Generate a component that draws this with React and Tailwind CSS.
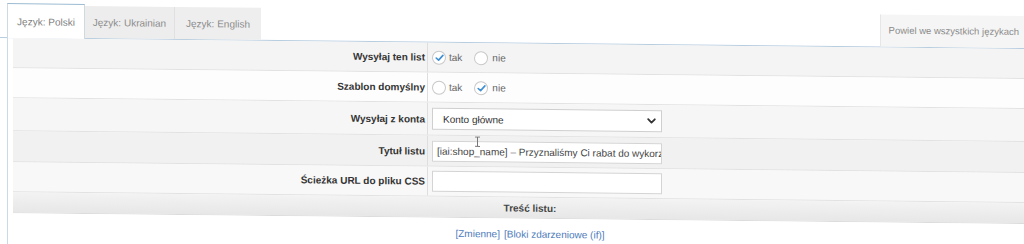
import React from "react";

function Radio({ checked }) {
  return (
    <span className="inline-flex h-[14px] w-[14px] shrink-0 items-center justify-center rounded-full border border-[#c8c8c8] bg-white">
      {checked && (
        <svg width="9" height="8" viewBox="0 0 9 8">
          <path
            d="M1.2 4.3 L3.6 6.4 L7.9 1.6"
            fill="none"
            stroke="#3f8fd4"
            strokeWidth="1.6"
            strokeLinecap="round"
            strokeLinejoin="round"
          />
        </svg>
      )}
    </span>
  );
}

function RadioPair({ value }) {
  return (
    <div className="flex items-center text-[10px] text-[#666]">
      <Radio checked={value === "tak"} />
      <span className="ml-[3px]">tak</span>
      <span className="ml-[12px]" />
      <Radio checked={value === "nie"} />
      <span className="ml-[4px]">nie</span>
    </div>
  );
}

function Row({ label, className, children }) {
  return (
    <div className={`flex border-b border-[#e2e2e2] ${className}`}>
      <div className="flex w-[414px] shrink-0 items-center justify-end pr-[2px] text-[10px] font-bold text-[#333]">
        {label}
      </div>
      <div className="flex flex-1 items-center border-l border-[#dedede] pl-[4px]">
        {children}
      </div>
    </div>
  );
}

export default function App() {
  return (
    <div className="relative h-[244px] w-[1024px] overflow-hidden bg-white font-['Liberation_Sans',Arial,sans-serif]">
      <div className="relative w-[1047px] origin-top-left skew-y-[0.62deg]">
        {/* tabs */}
        <div className="flex h-[38px] w-[1024px] items-end border-b border-[#b7cde0]">
          <div className="w-[7px] shrink-0" />
          <div className="relative -mb-px flex h-[35px] w-[78px] items-center justify-center border-x border-t border-[#cfd9e0] border-t-[#9dbbd2] bg-white text-[10px] text-[#808080]">
            Język: Polski
          </div>
          <div className="flex h-[32px] w-[90px] items-center justify-center border-r border-[#e0e0e0] bg-[#ededed] text-[10px] text-[#8c8c8c]">
            Język: Ukrainian
          </div>
          <div className="flex h-[32px] w-[86px] items-center justify-center bg-[#eeeeee] text-[10px] text-[#8c8c8c]">
            Język: English
          </div>
          <div className="ml-auto flex h-[32px] w-[144px] items-center justify-end border-l border-[#e6e6e6] bg-[#f5f5f5] pr-[5px] text-[9.5px] text-[#8a8a8a]">
            Powiel we wszystkich językach
          </div>
        </div>

        {/* form */}
        <div className="ml-[7px] border-l border-[#c9dbe7] pl-[5px]">
          <Row label="Wysyłaj ten list" className="h-[30px] bg-[#f4f4f4]">
            <RadioPair value="tak" />
          </Row>
          <Row label="Szablon domyślny" className="h-[30px] bg-[#fdfdfd]">
            <RadioPair value="nie" />
          </Row>
          <Row label="Wysyłaj z konta" className="h-[33px] bg-[#f6f6f6]">
            <div className="flex h-[22px] w-[230px] items-center justify-between border border-[#cfcfcf] bg-white pl-[10px] pr-[5px] text-[10px] text-[#333]">
              <span>Konto główne</span>
              <svg width="9" height="6" viewBox="0 0 9 6">
                <path
                  d="M1.2 1.2 L4.5 4.5 L7.8 1.2"
                  fill="none"
                  stroke="#333"
                  strokeWidth="1.8"
                  strokeLinecap="round"
                  strokeLinejoin="round"
                />
              </svg>
            </div>
          </Row>
          <Row label="Tytuł listu" className="h-[31px] bg-[#f1f1f1]">
            <div className="flex h-[21px] w-[230px] items-center overflow-hidden whitespace-nowrap border border-[#d4d4d4] bg-white pl-[4px] text-[10px] text-[#444]">
              [iai:shop_name] – Przyznaliśmy Ci rabat do wykorzystania
            </div>
          </Row>
          <Row label="Ścieżka URL do pliku CSS" className="h-[30px] bg-[#f8f8f8]">
            <div className="h-[21px] w-[230px] border border-[#d4d4d4] bg-white" />
          </Row>
          <div className="flex h-[21px] items-center justify-center border-b border-[#dcdcdc] bg-gradient-to-b from-[#f3f3f3] to-[#e7e7e7] text-[10px] font-bold text-[#444]">
            Treść listu:
          </div>
          <div className="flex h-[31px] items-center justify-center gap-[4px] bg-white text-[10px] text-[#4d7bbb]">
            <span>[Zmienne]</span>
            <span>[Bloki zdarzeniowe (if)]</span>
          </div>
        </div>

        {/* text cursor */}
        <svg
          className="absolute left-[474px] top-[131px]"
          width="7"
          height="11"
          viewBox="0 0 7 11"
        >
          <path
            d="M1 0.8 H6 M3.5 0.8 V10.2 M1 10.2 H6"
            fill="none"
            stroke="#777"
            strokeWidth="1"
          />
        </svg>
      </div>
    </div>
  );
}
